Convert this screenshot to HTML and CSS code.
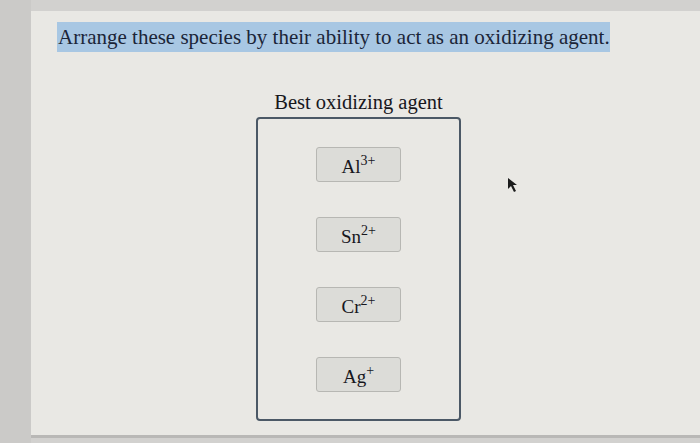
FILE: index.html
```html
<!DOCTYPE html>
<html lang="en">
<head>
    <meta charset="UTF-8">
    <meta name="viewport" content="width=device-width, initial-scale=1.0">
    <title>Oxidizing Agents - Ranking</title>
    <link rel="stylesheet" href="styles.css">
</head>
<body>
    <div class="screen">
        <div class="gutter"></div>
        <div class="panel">
            <p class="prompt"><span class="selected">Arrange these species by their ability to act as an oxidizing agent.</span></p>

            <div class="ranking">
                <div class="ranking-label">Best oxidizing agent</div>
                <div class="drop-box">
                    <div class="tile">Al<sup>3+</sup></div>
                    <div class="tile">Sn<sup>2+</sup></div>
                    <div class="tile">Cr<sup>2+</sup></div>
                    <div class="tile">Ag<sup>+</sup></div>
                </div>
            </div>

            <!-- mouse pointer -->
            <svg class="pointer" width="14" height="16" viewBox="0 0 14 16">
                <path d="M1 1 L1 12 L4 9 L7 15 L9 14 L6 8 L10 8 Z" fill="#1c1c1c"/>
            </svg>
        </div>
    </div>
</body>
</html>
```

FILE: styles.css
```css
body {
    margin: 0;
    background-color: #d2d1cf;
    font-family: "Liberation Serif", "Times New Roman", serif;
    color: #17171d;
}
.screen {
    display: flex;
    height: 443px;
    overflow: hidden;
}
.gutter {
    width: 31px;
    background: #cbcac8;
}
.panel {
    position: relative;
    flex: 1;
    margin-top: 11px;
    height: 424px;
    background: #e9e8e4;
    border-bottom: 3px solid #b9b8b6;
}
.prompt {
    margin: 0;
    padding: 11px 0 0 26px;
    font-size: 21px;
    line-height: 30px;
}
.selected {
    background: #a8c7e3;
    color: #1b2538;
    padding: 3px 0 3px 1px;
}
.ranking {
    width: 205px;
    margin: 38px 0 0 225px;
}
.ranking-label {
    text-align: center;
    font-size: 20.5px;
    line-height: 24px;
    margin-bottom: 3px;
}
.drop-box {
    height: 304px;
    border: 2px solid #4b5866;
    border-radius: 4px;
    display: flex;
    flex-direction: column;
    align-items: center;
    gap: 35px;
    padding-top: 28px;
    box-sizing: border-box;
}
.tile {
    width: 85px;
    height: 35px;
    box-sizing: border-box;
    border: 1px solid #b7b7b3;
    border-radius: 3px;
    background: #dcdcd8;
    text-align: center;
    font-size: 19px;
    line-height: 38px;
}
.tile sup {
    font-size: 14px;
    line-height: 0;
    vertical-align: 8px;
}
.pointer {
    position: absolute;
    left: 476px;
    top: 166px;
}
```
